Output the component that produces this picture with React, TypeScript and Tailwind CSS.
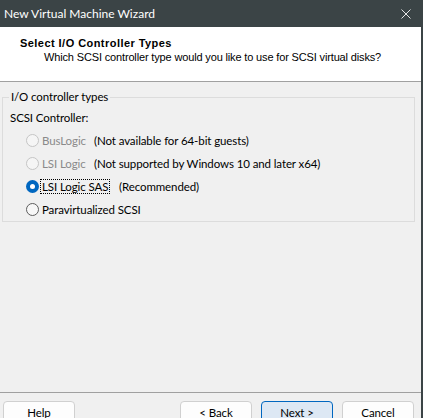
import React from "react";

const ui = "font-['Lato','Noto_Sans',sans-serif] text-[12px]";
const body = "text-[11.5px] tracking-[-0.1px]";
const tahoma = "font-['Liberation_Sans',Arial,sans-serif] text-[11px]";

function Radio({ checked, disabled }: { checked?: boolean; disabled?: boolean }) {
    if (checked) {
        return (
            <span className="flex h-[13px] w-[13px] shrink-0 items-center justify-center rounded-full bg-[#0067c0]">
                <span className="h-[5px] w-[5px] rounded-full bg-white" />
            </span>
        );
    }
    return (
        <span
            className={
                disabled
                    ? "h-[13px] w-[13px] shrink-0 rounded-full border border-[#c5c5c5] bg-[#f5f5f5]"
                    : "h-[13px] w-[13px] shrink-0 rounded-full border border-[#5d5d5d] bg-[#f7f7f7]"
            }
        />
    );
}

function Option({
    label,
    note,
    labelWidth,
    checked,
    disabled,
}: {
    label: string;
    note?: string;
    labelWidth?: string;
    checked?: boolean;
    disabled?: boolean;
}) {
    return (
        <div className="flex h-[23px] items-center pl-[23px]">
            <Radio checked={checked} disabled={disabled} />
            <div className={`${labelWidth ?? ""} shrink-0 pl-[1px]`}>
                <span
                    className={`${checked ? "border border-dotted border-black" : "border border-transparent"} px-[1px] leading-[14px] ${disabled ? "text-[#8a8a8a]" : "text-black"}`}
                >
                    {label}
                </span>
            </div>
            {note && <span className="text-black">{note}</span>}
        </div>
    );
}

function Button({ children, primary }: { children: React.ReactNode; primary?: boolean }) {
    return (
        <button
            className={`h-[23px] w-[72px] shrink-0 rounded-[4px] border leading-[18px] text-black ${body} ${primary ? "border-[#0067c0] bg-[#dde8f4]" : "border-[#d0d0d0] bg-[#fdfdfd]"}`}
        >
            {children}
        </button>
    );
}

export default function App() {
    return (
        <div className={`flex h-[418px] w-[423px] overflow-hidden bg-[#3b4446] ${ui}`}>
            <div className="flex w-[421px] flex-col">
                {/* Title bar */}
                <div className="flex h-[27px] shrink-0 items-center justify-between pl-[4px] pr-[10px] text-white">
                    <span className="leading-[16px]">New Virtual Machine Wizard</span>
                    <svg width="10" height="10" viewBox="0 0 10 10" className="mt-[1px]">
                        <path d="M0.5 0.5 L9.5 9.5 M9.5 0.5 L0.5 9.5" stroke="#e6e6e6" strokeWidth="1" />
                    </svg>
                </div>

                {/* Header */}
                <div className={`h-[55px] shrink-0 border-b border-[#a0a0a0] bg-white pl-[20px] pt-[10px] ${tahoma}`}>
                    <div className="font-bold leading-[13px] tracking-[0.45px] text-black">Select I/O Controller Types</div>
                    <div className="pl-[24px] pt-[1px] leading-[13px] tracking-[-0.15px] text-black">
                        Which SCSI controller type would you like to use for SCSI virtual disks?
                    </div>
                </div>

                {/* Body */}
                <div className={`flex-1 bg-[#f0f0f0] pt-[8px] ${body}`}>
                    <fieldset className="ml-[2px] w-[413px] border border-[#dcdcdc] px-0 pb-0">
                        <legend className="ml-[6px] px-[2px] leading-[14px] text-black">I/O controller types</legend>
                        <div className="pl-[7px] pt-[6px] leading-[16px] text-black">SCSI Controller:</div>
                        <div className="mt-[3px] flex flex-col">
                            <Option label="BusLogic" note="(Not available for 64-bit guests)" labelWidth="w-[55px]" disabled />
                            <Option label="LSI Logic" note="(Not supported by Windows 10 and later x64)" labelWidth="w-[55px]" disabled />
                            <Option label="LSI Logic SAS" note="(Recommended)" labelWidth="w-[80px]" checked />
                            <Option label="Paravirtualized SCSI" />
                        </div>
                    </fieldset>
                </div>

                {/* Footer */}
                <div className="flex h-[26px] shrink-0 items-start justify-between overflow-hidden border-t border-[#a0a0a0] bg-[#f0f0f0] pl-[3px] pr-[7px] pt-[8px]">
                    <Button>Help</Button>
                    <div className="flex gap-[9px]">
                        <Button>&lt; Back</Button>
                        <Button primary>Next &gt;</Button>
                        <Button>Cancel</Button>
                    </div>
                </div>
            </div>
        </div>
    );
}
